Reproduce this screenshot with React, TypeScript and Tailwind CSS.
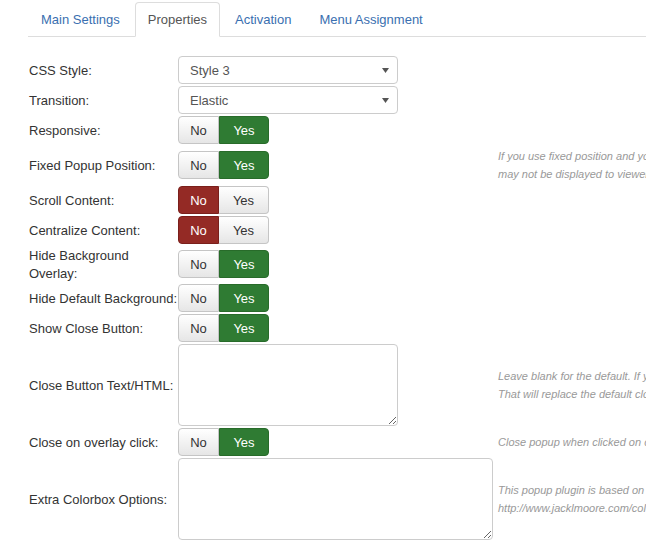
import React from 'react';

const Toggle: React.FC<{ value: boolean }> = ({ value }) => (
  <div className="flex h-[28px] text-[13px]">
    <span
      className={
        value
          ? 'w-[41px] flex items-center justify-center pt-px rounded-l-[4px] border border-[#c5c5c5] bg-gradient-to-b from-white to-[#e6e6e6] text-[#333]'
          : 'w-[41px] flex items-center justify-center pt-px rounded-l-[4px] border border-[#7a1f1b] bg-[#942a25] text-white'
      }
    >
      No
    </span>
    <span
      className={
        value
          ? 'w-[50px] flex items-center justify-center pt-px rounded-r-[4px] border border-[#286b2a] bg-[#2f7b33] text-white'
          : 'w-[50px] flex items-center justify-center pt-px rounded-r-[4px] border border-l-0 border-[#c5c5c5] bg-gradient-to-b from-white to-[#e6e6e6] text-[#333]'
      }
    >
      Yes
    </span>
  </div>
);

const Select: React.FC<{ value: string }> = ({ value }) => (
  <div className="w-[220px] h-[28px] flex items-center justify-between rounded-[4px] border border-[#ccc] bg-white pl-[11px] pr-[8px] pt-px text-[13px] text-[#555]">
    <span>{value}</span>
    <svg width="7" height="5" viewBox="0 0 7 5">
      <path d="M0 0h7L3.5 5z" fill="#555" />
    </svg>
  </div>
);

const Area: React.FC<{ width: string }> = ({ width }) => (
  <textarea className={`${width} h-[82px] block rounded-[4px] border border-[#ccc] bg-white outline-none`} />
);

const Help: React.FC<{ lines: string[] }> = ({ lines }) => (
  <div className="text-[11px] italic leading-[18px] text-[#999] whitespace-nowrap">
    {lines.map((l) => (
      <div key={l}>{l}</div>
    ))}
  </div>
);

type Row = { label: React.ReactNode; control: React.ReactNode; help?: string[]; h?: string };

const rows: Row[] = [
  { label: 'CSS Style:', control: <Select value="Style 3" /> },
  { label: 'Transition:', control: <Select value="Elastic" /> },
  { label: 'Responsive:', control: <Toggle value /> },
  {
    label: 'Fixed Popup Position:',
    control: <Toggle value />,
    help: ['If you use fixed position and your popup is too long, some content', 'may not be displayed to viewers on small screens.'],
    h: 'min-h-[38px]',
  },
  { label: 'Scroll Content:', control: <Toggle value={false} /> },
  { label: 'Centralize Content:', control: <Toggle value={false} /> },
  {
    label: (
      <>
        Hide Background
        <br />
        Overlay:
      </>
    ),
    control: <Toggle value />,
    h: 'h-[36px]',
  },
  { label: 'Hide Default Background:', control: <Toggle value /> },
  { label: 'Show Close Button:', control: <Toggle value /> },
  {
    label: 'Close Button Text/HTML:',
    control: <Area width="w-[220px]" />,
    help: ['Leave blank for the default. If you want to use an image, enter the img tag.', 'That will replace the default close button text.'],
  },
  { label: 'Close on overlay click:', control: <Toggle value />, help: ['Close popup when clicked on overlay.'] },
  {
    label: 'Extra Colorbox Options:',
    control: <Area width="w-[315px]" />,
    help: ['This popup plugin is based on Colorbox. For extra options see:', 'http://www.jacklmoore.com/colorbox/'],
  },
];

const tabs = ['Main Settings', 'Properties', 'Activation', 'Menu Assignment'];

const App: React.FC = () => (
  <div className="w-[646px] h-[549px] overflow-hidden bg-white font-['Liberation_Sans',Arial,sans-serif] text-[13px] text-[#333]">
    <ul className="ml-[28px] mt-[2px] flex gap-[2px] border-b border-[#ddd]">
      {tabs.map((t) => (
        <li key={t} className="-mb-px">
          <span
            className={
              t === 'Properties'
                ? 'h-[35px] flex items-center pt-px px-[12px] rounded-t-[4px] border border-[#ddd] border-b-white bg-white text-[#555]'
                : 'h-[35px] flex items-center pt-px px-[12px] rounded-t-[4px] border border-transparent text-[#3a6fb0]'
            }
          >
            {t}
          </span>
        </li>
      ))}
    </ul>

    <div className="mt-[19px] pl-[29px] flex flex-col gap-[2px]">
      {rows.map((r, i) => (
        <div key={i} className={`flex items-center ${r.h ?? ''}`}>
          <div className="w-[149px] shrink-0 pt-px leading-[18px] whitespace-nowrap">{r.label}</div>
          <div className="w-[320px] shrink-0">{r.control}</div>
          {r.help && <Help lines={r.help} />}
        </div>
      ))}
    </div>
  </div>
);

export default App;
